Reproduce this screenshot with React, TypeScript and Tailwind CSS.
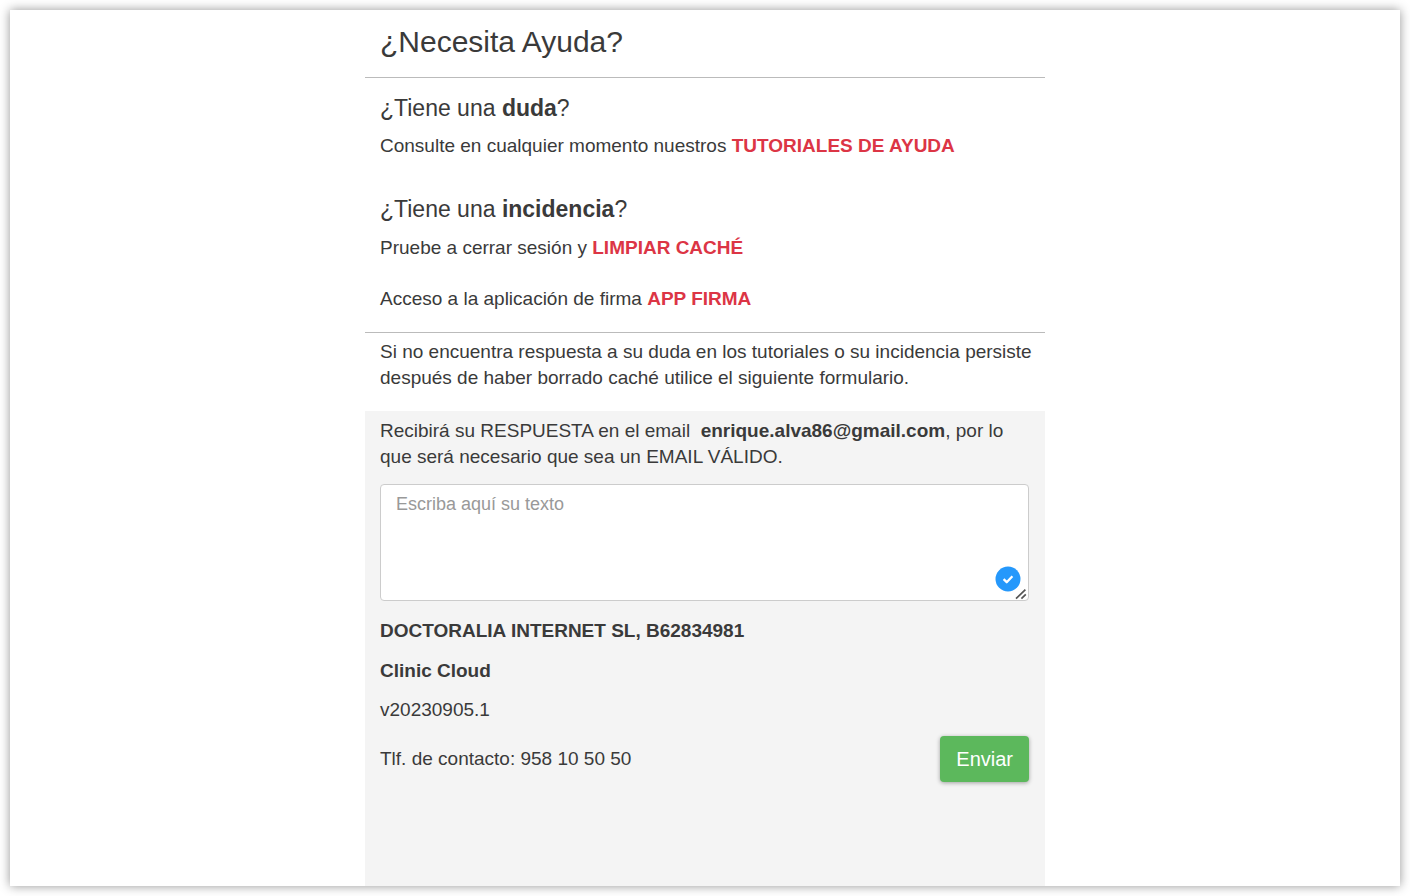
interface FormField {
  placeholder: string;
}

const field: FormField = { placeholder: 'Escriba aquí su texto' };

function ActionLink({ children }: { children: string }) {
  return (
    <a href="#" className="font-bold text-[#dc3545]">
      {children}
    </a>
  );
}

function HelpTopics() {
  return (
    <section className="border-b border-[#bbbbbb] px-[15px] pt-4 pb-5">
      <h2 className="text-[23px] leading-7">
        ¿Tiene una <strong>duda</strong>?
      </h2>
      <p className="mt-[11px]">
        Consulte en cualquier momento nuestros <ActionLink>TUTORIALES DE AYUDA</ActionLink>
      </p>
      <h2 className="mt-9 text-[23px] leading-7">
        ¿Tiene una <strong>incidencia</strong>?
      </h2>
      <p className="mt-3">
        Pruebe a cerrar sesión y <ActionLink>LIMPIAR CACHÉ</ActionLink>
      </p>
      <p className="mt-[25px]">
        Acceso a la aplicación de firma <ActionLink>APP FIRMA</ActionLink>
      </p>
    </section>
  );
}

function ContactForm() {
  return (
    <form className="grow bg-[#f4f4f4] pt-[7px] pr-4 pl-[15px]" onSubmit={(e) => e.preventDefault()}>
      <label htmlFor="mensaje" className="block">
        Recibirá su RESPUESTA en el email &nbsp;<strong>enrique.alva86@gmail.com</strong>, por lo <br />
        que será necesario que sea un EMAIL VÁLIDO.
      </label>
      <div className="relative mt-[14px]">
        <textarea
          id="mensaje"
          placeholder={field.placeholder}
          className="block h-[117px] w-full resize-none rounded border border-[#cccccc] bg-white px-[15px] py-[6px] text-lg leading-[26px] placeholder:text-[#999999]"
        />
        <svg className="absolute right-2 bottom-[9px] size-[26px]" viewBox="0 0 26 26" fill="none" aria-hidden="true">
          <circle cx="13" cy="13" r="12.5" fill="#2598fb" />
          <path d="M8.6 13.2l3.1 3 5.7-6" stroke="white" strokeWidth="2.3" strokeLinejoin="round" />
        </svg>
        {/* Resize grip */}
        <svg className="pointer-events-none absolute right-[2px] bottom-[1px] size-3" viewBox="0 0 12 12" fill="none" aria-hidden="true">
          <path d="M1 10.6l9.4-9M6.4 10.6l4.4-4.2" stroke="#555555" strokeWidth="1.7" />
        </svg>
      </div>
      <p className="mt-[17px] font-bold">DOCTORALIA INTERNET SL, B62834981</p>
      <p className="mt-[14px] font-bold">Clinic Cloud</p>
      <p className="mt-[13px]">v20230905.1</p>
      <div className="mt-[13px] flex items-center justify-between">
        <p>Tlf. de contacto: 958 10 50 50</p>
        <button type="submit" className="rounded bg-[#5cb85c] px-4 py-[10px] text-xl leading-[26px] text-white shadow-[0_1px_4px_rgba(0,0,0,0.35)]">
          Enviar
        </button>
      </div>
    </form>
  );
}

export default function App() {
  return (
    <div className="flex min-h-screen bg-white p-[10px] font-['Liberation_Sans',Arial,sans-serif] text-[19px] leading-[26px] text-[#3a3a3a]">
      <div className="flex grow justify-center bg-white shadow-[0_0_10px_rgba(0,0,0,0.42)]">
        <main className="flex w-full max-w-[680px] flex-col">
          <h1 className="border-b border-[#bbbbbb] px-[15px] pt-[14px] pb-[17px] text-3xl leading-9">¿Necesita Ayuda?</h1>
          <HelpTopics />
          <p className="pt-[6px] pr-2 pb-5 pl-[15px]">
            Si no encuentra respuesta a su duda en los tutoriales o su incidencia persiste después de haber borrado caché utilice el siguiente formulario.
          </p>
          <ContactForm />
        </main>
      </div>
    </div>
  );
}
